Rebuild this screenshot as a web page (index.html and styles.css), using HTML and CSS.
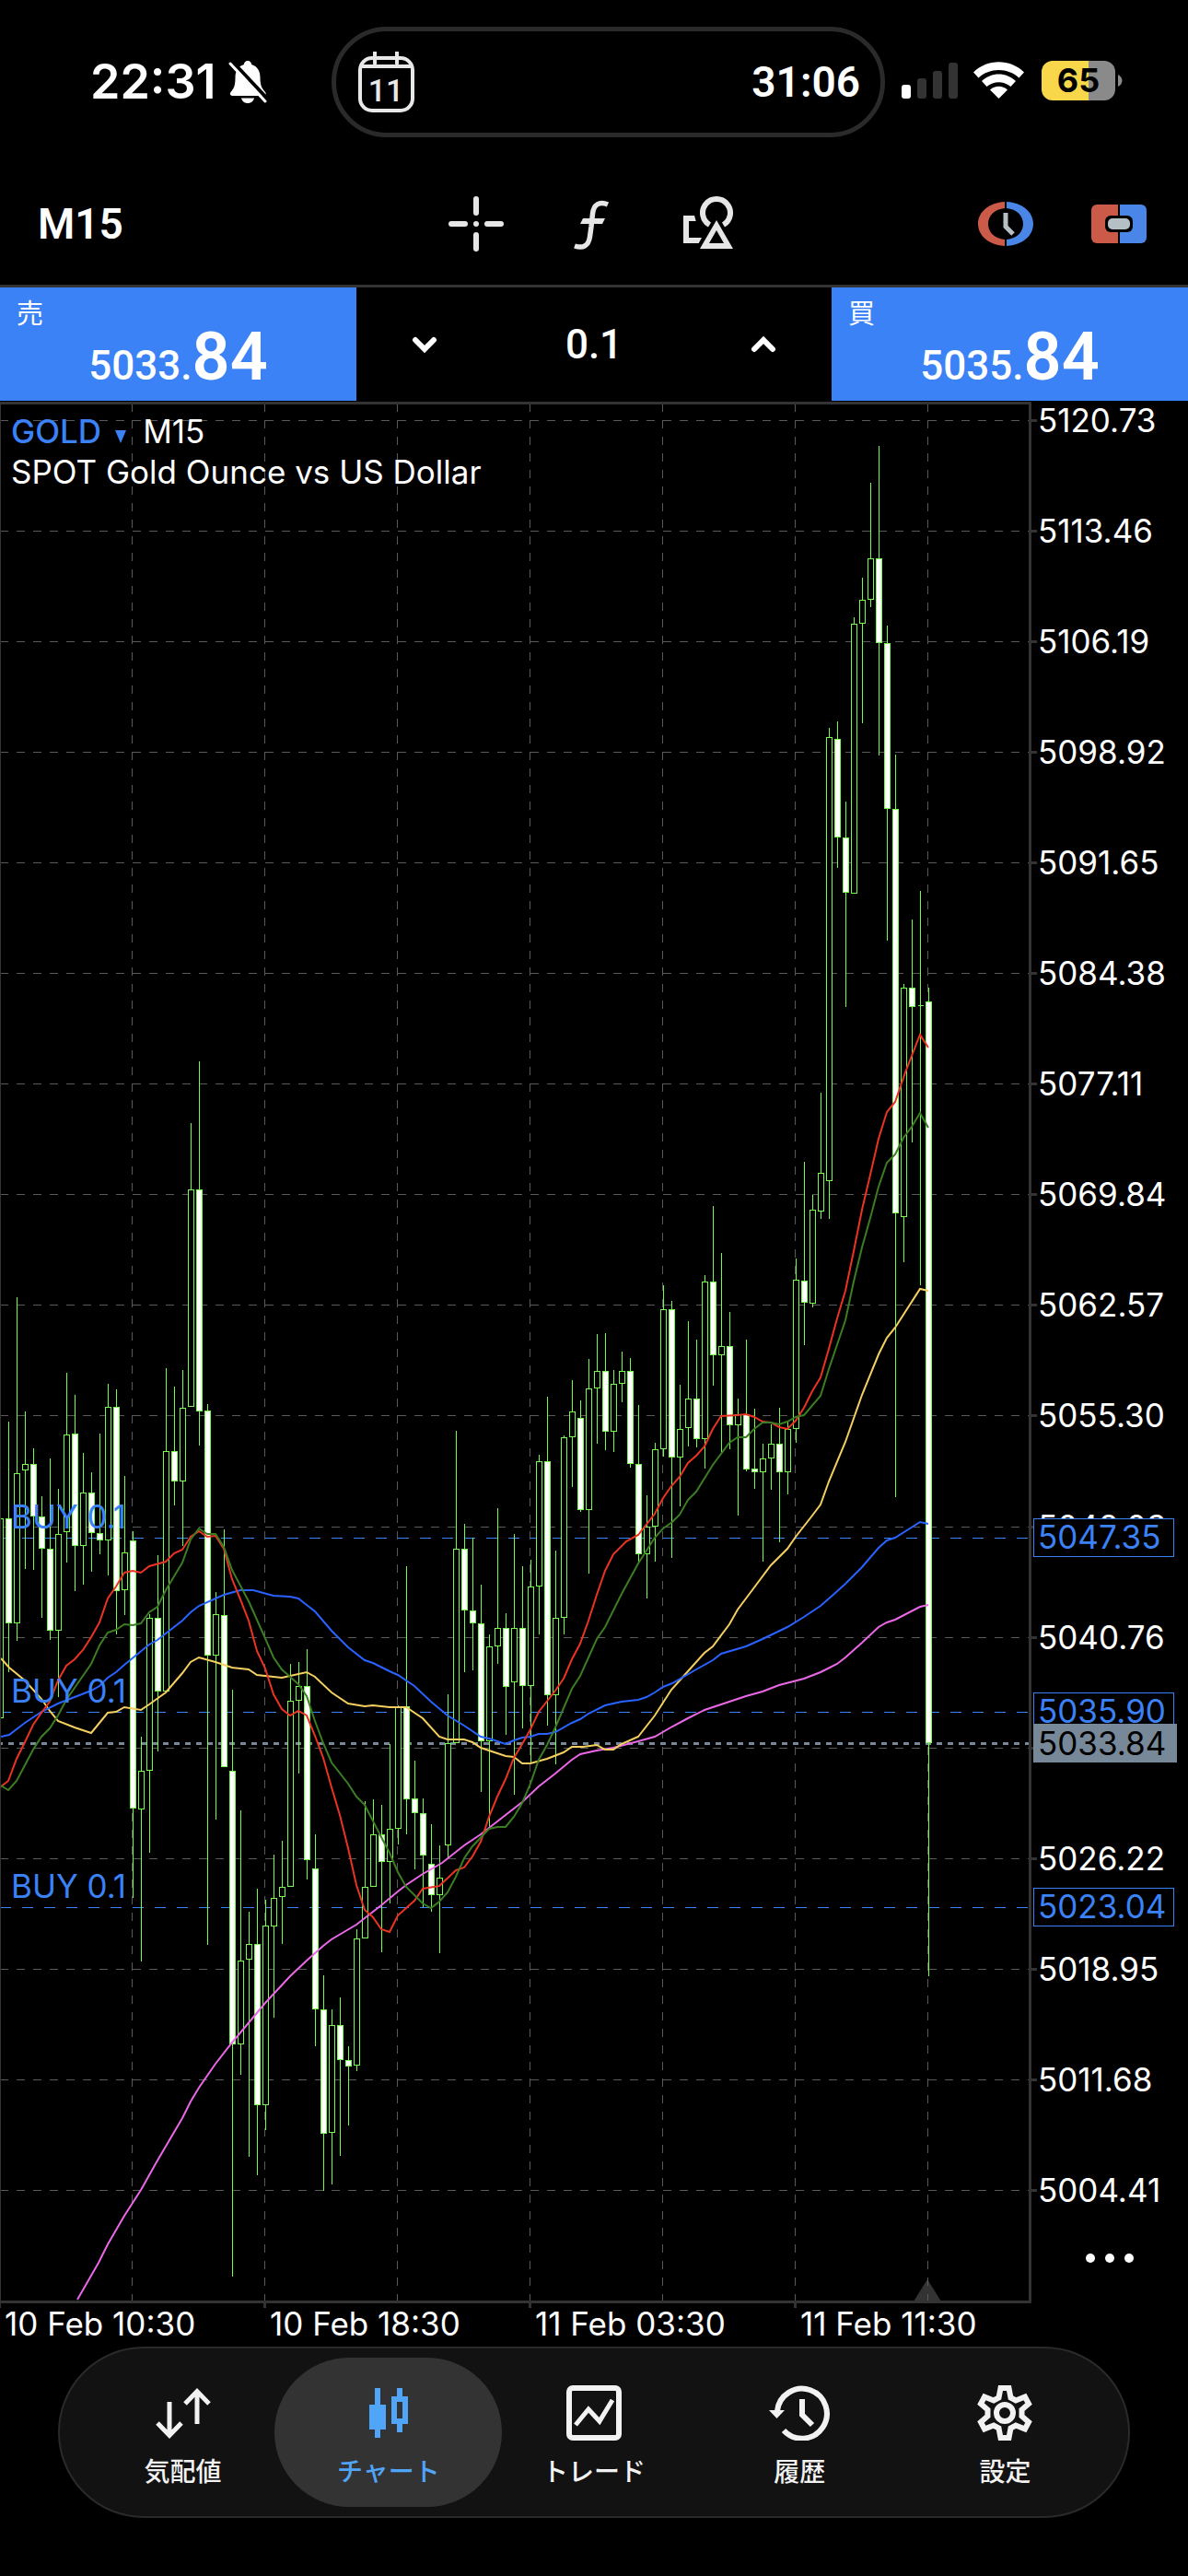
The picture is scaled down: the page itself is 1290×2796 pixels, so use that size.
FILE: index.html
```html
<!DOCTYPE html>
<html lang="ja">
<head>
<meta charset="utf-8">
<meta name="viewport" content="width=device-width, initial-scale=1">
<title>GOLD M15</title>
<link rel="stylesheet" href="styles.css">
</head>
<body>
<header class="status">
  <div class="status-left">
    <span class="clock">22:31</span>
    <svg class="bell" viewBox="0 0 42 46" width="42" height="46" aria-hidden="true">
      <path fill="#fff" d="M21 0c2.500 0 4 1.700 4.200 4C31.500 6 34.500 11 34.500 18c0 9 2 12 5.500 16 1.500 2 .5 4-2 4H4.500c-2.500 0-3.500-2-2-4C6 30 7.500 27 7.500 18 7.500 11 10.500 6 16.800 4 17 1.700 18.500 0 21 0z"/>
      <path fill="#fff" d="M14 40.500h14c-.8 3.300-3.500 5.500-7 5.500s-6.200-2.200-7-5.500z"/>
      <path stroke="#000" stroke-width="4" d="M4.500 1 42 41"/>
      <path stroke="#fff" stroke-width="3" stroke-linecap="round" d="M2 3 40 44"/>
    </svg>
  </div>
  <div class="island">
    <svg viewBox="0 0 61 66" width="61" height="66" aria-hidden="true">
      <rect x="2" y="7" width="57" height="57" rx="13" fill="none" stroke="#e8e8e8" stroke-width="4"/>
      <path d="M3 16H58" stroke="#e8e8e8" stroke-width="4"/>
      <path d="M18 1V13M42 1V13" stroke="#e8e8e8" stroke-width="4" stroke-linecap="round"/>
      <text x="30" y="54" class="cal-day">11</text>
    </svg>
    <span class="timer">31:06</span>
  </div>
  <svg class="indicators" viewBox="0 0 240 46" width="240" height="46" aria-hidden="true">
    <rect x="0" y="26" width="10" height="15" rx="3" fill="#fff"/>
    <g fill="#333"><rect x="17" y="19" width="10" height="22" rx="3"/><rect x="34" y="11" width="10" height="30" rx="3"/><rect x="51" y="2" width="10" height="39" rx="3"/></g>
    <g fill="#fff">
      <path d="M78 12.500C93 -2.500 118 -2.500 133 12.500L127.500 18.500C115.500 7 95.500 7 83.500 18.500Z"/>
      <path d="M87 22C97.500 12 113.500 12 124 22L118.500 28C111 21.500 100 21.500 92.500 28Z"/>
      <path d="M96 31.500C101.500 26.500 109.500 26.500 115 31.500L105.500 41Z"/>
    </g>
    <path fill="#f8d74a" d="M164 0h39v43h-39a12 12 0 0 1-12-12V12a12 12 0 0 1 12-12z"/>
    <path fill="#8a8a8a" d="M203 0h17a12 12 0 0 1 12 12v19a12 12 0 0 1-12 12h-17z"/>
    <path fill="#8a8a8a" d="M235 15c6 3 6 10 0 13z"/>
    <text x="192" y="34" class="battery">65</text>
  </svg>
</header>

<div class="toolbar">
  <button class="timeframe" type="button">M15</button>
  <div class="tools">
    <button type="button" aria-label="十字線">
      <svg viewBox="0 0 60 60" width="60" height="60"><path d="M30 3V18M30 42V57M3 30H18M42 30H57" stroke="#e6e6e6" stroke-width="6" stroke-linecap="round"/><circle cx="30" cy="30" r="3" fill="#e6e6e6"/></svg>
    </button>
    <button type="button" aria-label="インディケータ">
      <svg viewBox="0 0 60 60" width="60" height="60"><path d="M47 9C38 5 31.500 9 30.500 19L29 33 27.500 44C26 54 20 57 11 54" fill="none" stroke="#e6e6e6" stroke-width="5.500"/><path d="M20 24H44L41 30H17Z" fill="#e6e6e6"/></svg>
    </button>
    <button type="button" aria-label="オブジェクト">
      <svg viewBox="0 0 60 60" width="60" height="60"><path d="M31.500 31A15 15 0 1 1 46.500 31" fill="none" stroke="#e6e6e6" stroke-width="6"/><path fill="#e6e6e6" fill-rule="evenodd" d="M39 26 57 57H21ZM39 37 31 51H47ZM3 21H15L16.700 27H9V45H23L19.700 51H3Z"/></svg>
    </button>
  </div>
  <div class="modes">
    <button type="button" aria-label="取引時間">
      <svg viewBox="0 0 60 48" width="60" height="48"><path fill="#cb5a48" d="M29 0V7C18 8 11 15 11 24S18 40 29 41V48C12 47 0 37 0 24S12 1 29 0Z"/><path fill="#4a86e8" d="M31 0V7C42 8 49 15 49 24S42 40 31 41V48C48 47 60 37 60 24S48 1 31 0Z"/><path d="M30 12V27L38 35" fill="none" stroke="#b4c0c6" stroke-width="5"/></svg>
    </button>
    <button type="button" aria-label="ワンクリック取引">
      <svg viewBox="0 0 60 42" width="60" height="42"><path fill="#cb5a48" d="M6 0H29V42H6A6 6 0 0 1 0 36V6A6 6 0 0 1 6 0Z"/><path fill="#4a86e8" d="M31 0H54A6 6 0 0 1 60 6V36A6 6 0 0 1 54 42H31Z"/><rect x="15" y="12" width="30" height="18" rx="6"/><rect x="18" y="15" width="24" height="12" rx="5" fill="#b4c0c6"/></svg>
    </button>
  </div>
</div>

<section class="trade">
  <button class="quote" type="button"><span class="side">売</span><span class="price">5033.<b>84</b></span></button>
  <div class="volume">
    <button type="button" aria-label="減らす"><svg viewBox="0 0 28 20" width="28" height="20"><path d="M4 5 14 15 24 5" class="chevron"/></svg></button>
    <input type="text" value="0.1" aria-label="ロット" size="4">
    <button type="button" aria-label="増やす"><svg viewBox="0 0 28 20" width="28" height="20"><path d="M4 15 14 5 24 15" class="chevron"/></svg></button>
  </div>
  <button class="quote" type="button"><span class="side">買</span><span class="price">5035.<b>84</b></span></button>
</section>

<main class="chart">
  <svg id="plot" class="plot" viewBox="0 435 1290 2106" role="img" aria-label="GOLD M15"></svg>
  <div class="legend">
    <button type="button" class="symbol">GOLD <svg viewBox="0 0 12 14" width="12" height="14"><path d="M0 0H12L6 14Z" fill="#3b82f6"/></svg></button>
    <span>M15</span>
    <p>SPOT Gold Ounce vs US Dollar</p>
  </div>
  <button type="button" class="more" aria-label="その他"><svg viewBox="0 0 52 10" width="52" height="10" fill="#fff"><circle cx="5" cy="5" r="5"/><circle cx="26" cy="5" r="5"/><circle cx="47" cy="5" r="5"/></svg></button>
</main>

<nav class="tabs">
  <a href="#quotes"><svg viewBox="0 0 60 60" width="60" height="60"><path class="line thin" d="M15 18V55M2 41 15 54.500 28 41M45 42V6M32 20 45 6.500 58 20"/></svg>気配値</a>
  <a href="#chart" class="active" aria-current="page"><svg viewBox="0 0 60 60" width="60" height="60"><path fill="#50a5f8" d="M15 3h6v18h6v27h-6v9h-6v-9H9V21h6zM39 3h6v9h6v30h-6v9h-6v-9h-6V12h6zM39 18v18h6V18z" fill-rule="evenodd"/></svg>チャート</a>
  <a href="#trade"><svg viewBox="0 0 60 60" width="60" height="60"><rect class="line" x="3" y="3" width="54" height="54" rx="4"/><path class="line thin" d="M10 43 24 26 36 39 50 16"/></svg>トレード</a>
  <a href="#history"><svg viewBox="0 0 66 60" width="66" height="60"><path class="line" d="M9 28A27 27 0 1 1 16 49"/><path fill="#f2f2f2" d="M0 27H17L8.500 36Z"/><path class="line" d="M36 15V32L47 43"/></svg>履歴</a>
  <a href="#settings"><svg viewBox="0 0 60 60" width="60" height="60"><path class="line" d="M25.500 3H34.500L36.500 13.500 42 16.500 52 12.500 56 20 48.500 26.500V33.500L56 40 52 47.500 42 43.500 36.500 46.500 34.500 57H25.500L23.500 46.500 18 43.500 8 47.500 4 40 11.500 33.500V26.500L4 20 8 12.500 18 16.500 23.500 13.500Z"/><circle class="line" cx="30" cy="30" r="9"/></svg>設定</a>
</nav>
<script src="chart.js"></script>
</body>
</html>
```
FILE: styles.css
```css
* { box-sizing: border-box; }

body {
  margin: 0;
  min-height: 100vh;
  background: #000;
  color: #fff;
  font-family: Inter, "Noto Sans CJK JP", sans-serif;
}

button {
  padding: 0;
  border: 0;
  background: none;
  color: inherit;
  font: inherit;
  cursor: pointer;
}

svg { display: block; }

/* status bar */
.status {
  display: grid;
  grid-template-columns: 360fr 601fr 329fr;
  align-items: center;
  padding: 29px 0 28px;
}
.status-left {
  display: flex;
  align-items: center;
  gap: 14px;
  padding-left: 98px;
}
.clock { font-size: 52px; font-weight: 600; line-height: 60px; }
.island {
  display: flex;
  align-items: center;
  justify-content: space-between;
  height: 120px;
  padding: 0 22px 0 24px;
  border: 5px solid #2a2a2a;
  border-radius: 60px;
}
.cal-day {
  fill: #e8e8e8;
  font: 500 34px Roboto, sans-serif;
  text-anchor: middle;
}
.timer { font: 600 46px Roboto, sans-serif; }
.indicators { margin-left: 18px; overflow: visible; }
.battery { font-size: 36px; font-weight: 700; text-anchor: middle; }

/* toolbar */
.toolbar {
  display: grid;
  grid-template-columns: 1fr auto 1fr;
  align-items: center;
  height: 132px;
  padding: 0 45px 0 41px;
}
.timeframe {
  justify-self: start;
  font: 600 46px Roboto, sans-serif;
}
.tools { display: flex; gap: 66px; }
.modes { display: flex; align-items: center; justify-content: flex-end; gap: 63px; }

/* one-click trading */
.trade {
  display: grid;
  grid-template-columns: 3fr 4fr 3fr;
  height: 126px;
  border-top: 3px solid #333;
}
.quote {
  display: grid;
  grid-template-rows: 42px 1fr;
  background: #3b82f6;
  text-align: center;
}
.side {
  padding: 6px 0 0 18px;
  font: 400 29px/40px "Noto Sans CJK JP", sans-serif;
  text-align: left;
}
.price { font: 500 44px/68px Roboto, sans-serif; }
.price b { font-size: 72px; font-weight: 600; }
.volume {
  display: flex;
  align-items: center;
  justify-content: space-between;
  padding: 0 60px;
}
.volume input {
  border: 0;
  background: none;
  color: #fff;
  font: 500 44px Roboto, sans-serif;
  text-align: center;
}
.chevron { fill: none; stroke: #fff; stroke-width: 6; stroke-linecap: round; stroke-linejoin: miter; }

/* chart */
.chart { position: relative; }
.plot { width: 100%; height: auto; }
.plot text { font-size: 35px; fill: #fff; }
.plot .order-text { fill: #3b82f6; }
.plot .current-text { fill: #000; }
.frame { fill: none; stroke: #333; stroke-width: 3; }
.grid { fill: none; stroke: #5a5a5a; stroke-dasharray: 9 9; }
.order { fill: none; stroke: #3b82f6; stroke-dasharray: 12 12; }
.order-box { fill: #000; stroke: #3b82f6; }
.current { fill: none; stroke: #778899; stroke-width: 3; stroke-dasharray: 6 6; }
.wick { fill: none; stroke: #75fb4c; }
.up { fill: #000; stroke: #75fb4c; }
.down { fill: #fff; stroke: #75fb4c; }
.ma { fill: none; stroke-width: 2; }

.legend {
  position: absolute;
  top: 11px;
  left: 12px;
  font-size: 35px;
  line-height: 44px;
}
.legend p { margin: 0; }
.symbol { color: #3b82f6; font-weight: 500; }
.symbol svg { display: inline-block; margin: 0 8px 0 6px; }
.more { position: absolute; right: 59px; bottom: 85px; }

/* tab bar */
.tabs {
  display: grid;
  grid-template-columns: repeat(5, 1fr);
  margin: 6px 63px 63px;
  padding: 10px 22px;
  height: 186px;
  border: 2px solid #2a2a2a;
  border-radius: 93px;
  background: #121212;
}
.tabs a {
  display: flex;
  flex-direction: column;
  align-items: center;
  gap: 12px;
  padding-top: 30px;
  color: #f2f2f2;
  font: 500 28px/40px "Noto Sans CJK JP", sans-serif;
  text-decoration: none;
}
.tabs .active {
  margin: 0 -12px;
  border-radius: 81px;
  background: #333;
  color: #50a5f8;
}
.line { fill: none; stroke: #f2f2f2; stroke-width: 6; }
.thin { stroke-width: 5; }
```
FILE: chart.js
```js
// Candles, nine units apart: [high, body top, body bottom, low, rising]
const candles = [
  [1648,1648,1864,1864,1],[1543,1648,1761,1814,0],[1408,1599,1761,1780,1],[1532,1589,1595,1702,1],
  [1572,1589,1645,1703,0],[1624,1646,1680,1755,0],[1583,1681,1769,1779,0],[1616,1665,1769,1841,1],
  [1490,1557,1662,1695,1],[1514,1556,1677,1726,0],[1577,1620,1677,1719,1],[1598,1620,1663,1705,0],
  [1556,1664,1671,1686,0],[1502,1527,1671,1709,1],[1508,1527,1726,1773,0],[1602,1685,1725,1752,1],
  [1662,1672,1962,2059,0],[1885,1922,1963,2128,1],[1752,1756,1921,2010,1],[1688,1756,1835,1900,0],
  [1485,1575,1835,1835,1],[1505,1575,1607,1633,0],[1487,1528,1607,1677,1],[1219,1291,1526,1526,1],
  [1152,1291,1531,1568,0],[1524,1531,1796,2110,0],[1728,1752,1796,1974,1],[1660,1753,1917,1917,0],
  [1834,1922,2218,2470,0],[1965,2128,2218,2251,1],[2075,2110,2126,2340,1],[2050,2110,2284,2360,0],
  [2062,2090,2284,2311,1],[2013,2060,2090,2189,1],[1998,2048,2058,2109,1],[1806,1846,2047,2047,1],
  [1804,1830,1845,1924,1],[1790,1830,2018,2039,0],[1991,2028,2180,2220,0],[2144,2181,2315,2377,0],
  [2181,2198,2314,2370,1],[2168,2198,2235,2339,0],[2221,2236,2242,2306,0],[2094,2104,2241,2247,1],
  [1955,2048,2103,2103,1],[1953,1991,2047,2047,1],[1959,1991,2020,2118,0],[1893,1985,2020,2065,1],
  [1851,1853,1984,2001,1],[1700,1852,1952,1990,0],[1911,1952,1967,2028,0],[1952,1968,2013,2069,0],
  [1980,2023,2056,2074,0],[2003,2038,2056,2119,1],[1839,1892,2002,2015,1],[1553,1681,1891,1891,1],
  [1654,1681,1747,1814,0],[1669,1748,1761,1812,0],[1720,1762,1889,1944,0],[1774,1787,1889,1985,1],
  [1637,1767,1786,1805,1],[1751,1767,1830,1882,0],[1665,1767,1825,1947,1],[1700,1767,1829,1875,0],
  [1693,1722,1829,1913,1],[1579,1586,1721,1773,1],[1516,1586,1839,1872,0],[1683,1756,1839,1914,1],
  [1558,1560,1755,1773,1],[1498,1532,1559,1613,1],[1520,1539,1638,1640,0],[1475,1507,1638,1707,1],
  [1448,1488,1506,1566,1],[1447,1488,1553,1573,0],[1487,1502,1553,1575,1],[1467,1488,1501,1521,1],
  [1474,1488,1588,1592,0],[1525,1589,1686,1695,0],[1623,1657,1686,1734,1],[1566,1573,1656,1694,1],
  [1395,1421,1572,1580,1],[1412,1421,1581,1690,0],[1503,1551,1581,1634,1],[1434,1518,1549,1569,1],
  [1454,1518,1561,1570,0],[1384,1391,1561,1593,1],[1309,1391,1470,1503,0],[1360,1461,1470,1576,1],
  [1424,1461,1546,1572,0],[1518,1535,1546,1644,1],[1454,1535,1594,1596,0],[1529,1594,1597,1615,0],
  [1567,1583,1597,1694,1],[1546,1567,1582,1616,1],[1528,1567,1597,1673,0],[1543,1551,1597,1621,1],
  [1366,1389,1550,1565,1],[1261,1390,1413,1459,0],[1297,1313,1414,1418,1],[1186,1273,1314,1322,1],
  [790,800,1281,1322,1],[783,802,908,941,0],[870,909,968,1092,0],[670,677,969,969,1],
  [627,651,676,784,1],[524,606,650,658,1],[484,606,697,819,0],[679,698,877,1020,0],
  [819,878,1316,1624,0],[1068,1072,1320,1369,1],[998,1072,1092,1239,0],[967,1091,1091,1394,1],
  [1072,1087,1891,2144,0]
];

// Moving averages: colour and points
const averages = [
  ['#ea68e6', '84,2496 107,2456 117,2436 135,2405 153,2377 162,2361 171,2345 198,2299 207,2281 216,2266 234,2240 252,2217 288,2174 315,2145 333,2128 351,2112 360,2105 387,2089 414,2068 432,2053 441,2046 459,2034 480,2022 504,2003 522,1991 540,1977 567,1956 585,1939 603,1925 621,1910 630,1904 648,1900 666,1897 693,1890 711,1885 730,1874 747,1865 765,1856 783,1850 810,1841 828,1836 846,1829 873,1822 891,1815 909,1806 918,1799 936,1783 954,1766 963,1761 972,1758 999,1744 1008,1742'],
  ['#f5cf60', '1,1800 10,1810 27,1824 45,1844 54,1857 63,1868 81,1875 99,1881 117,1859 126,1858 135,1853 153,1856 162,1850 180,1837 198,1816 207,1804 216,1799 234,1804 252,1810 270,1812 279,1818 306,1821 315,1819 333,1815 342,1820 360,1837 378,1849 396,1852 405,1851 423,1853 441,1853 459,1865 477,1885 486,1888 504,1888 513,1891 522,1897 549,1906 558,1907 567,1914 576,1914 594,1909 612,1902 621,1896 633,1896 648,1894 657,1899 666,1899 675,1893 693,1885 711,1862 729,1834 747,1814 765,1794 774,1787 792,1763 801,1747 819,1723 837,1699 855,1681 864,1668 882,1645 891,1633 900,1608 918,1565 936,1514 954,1470 963,1452 972,1441 999,1399 1008,1401'],
  ['#2962ff', '1,1885 10,1883 27,1870 45,1858 63,1849 99,1835 108,1830 117,1821 126,1815 135,1807 162,1785 171,1780 198,1759 207,1750 216,1743 243,1731 261,1726 275,1726 297,1732 315,1733 324,1735 333,1742 342,1749 360,1770 378,1788 396,1802 405,1805 423,1814 432,1818 450,1830 468,1847 486,1862 504,1873 522,1885 531,1887 549,1893 558,1889 567,1886 576,1885 585,1882 594,1882 603,1880 621,1870 630,1866 639,1860 657,1851 675,1847 693,1845 702,1842 711,1837 720,1831 730,1827 756,1812 774,1802 783,1795 810,1787 828,1779 855,1766 873,1755 891,1743 907,1729 918,1719 936,1701 954,1680 963,1672 972,1669 999,1652 1008,1654'],
  ['#eb3324', '0,1940 9,1933 18,1909 27,1891 36,1872 45,1859 54,1847 63,1824 72,1808 81,1801 90,1791 99,1777 108,1761 117,1735 126,1722 135,1707 144,1705 153,1707 162,1700 180,1695 189,1686 198,1682 207,1668 216,1662 225,1668 234,1667 243,1681 252,1714 261,1736 270,1759 279,1792 288,1811 297,1839 306,1855 315,1862 324,1857 333,1862 342,1884 351,1908 360,1940 369,1970 378,2006 387,2046 396,2073 405,2081 414,2094 423,2097 432,2079 450,2063 459,2050 477,2047 495,2030 504,2027 513,2015 522,1999 531,1972 540,1950 549,1931 558,1908 567,1893 576,1877 585,1858 603,1835 612,1822 621,1801 630,1784 639,1759 648,1731 657,1705 666,1687 680,1673 693,1666 711,1643 720,1626 729,1613 738,1603 747,1588 756,1580 765,1570 774,1551 783,1537 801,1536 810,1535 819,1538 828,1543 837,1544 846,1549 855,1551 864,1542 873,1528 882,1510 891,1495 900,1464 909,1431 918,1401 927,1358 936,1313 945,1275 954,1236 963,1207 972,1196 983,1164 999,1123 1008,1137'],
  ['#3b7d23', '1,1938 9,1943 18,1933 27,1916 36,1899 45,1885 54,1876 63,1862 72,1845 81,1832 99,1806 108,1786 117,1772 126,1769 135,1763 144,1764 153,1762 162,1750 171,1744 180,1726 189,1711 198,1696 207,1671 216,1659 225,1665 234,1665 243,1679 252,1704 270,1738 287,1776 297,1799 306,1812 315,1820 324,1828 333,1841 342,1868 351,1892 360,1913 378,1936 387,1950 396,1959 414,1994 423,2011 432,2032 441,2048 459,2066 468,2071 477,2064 486,2054 495,2037 504,2017 513,2004 531,1985 540,1983 549,1983 558,1972 567,1957 576,1936 585,1910 594,1894 603,1875 621,1833 630,1819 648,1779 657,1766 675,1730 693,1697 711,1669 720,1659 730,1652 738,1644 747,1628 756,1619 774,1590 792,1566 801,1560 810,1560 819,1551 828,1544 837,1544 846,1546 855,1543 864,1538 873,1536 891,1515 900,1486 918,1433 927,1391 936,1354 945,1322 954,1288 963,1262 972,1253 981,1235 990,1223 999,1208 1008,1224']
];

const prices = ['5120.73','5113.46','5106.19','5098.92','5091.65','5084.38','5077.11','5069.84','5062.57','5055.30','5048.03','5040.76','5033.49','5026.22','5018.95','5011.68','5004.41'];
const orders = [['5047.35', 1669], ['5035.90', 1858], ['5023.04', 2070]];
const times = ['10 Feb 10:30', '10 Feb 18:30', '11 Feb 03:30', '11 Feb 11:30'];
const crisp = 'shape-rendering="crispEdges"';

let out = '';
const text = (x, y, s, cls = '') => `<text x="${x}" y="${y}" class="${cls}">${s}</text>`;
const path = (cls, d) => `<path class="${cls}" ${crisp} d="${d}"/>`;

// triangle that marks the newest bar
out += '<path d="M1007 2474 1022 2498H992Z" fill="#333"/>';

// grid
const rows = prices.map((p, i) => Math.floor(456 + i * 120.1) + 0.5);
out += path('grid', rows.map(y => `M0 ${y}H1117`).join(''));
for (let x = 143.5; x < 1100; x += 144) out += path('grid', `M${x} 438V2498`);

// order and price levels
orders.forEach(([, y]) => { out += path('order', `M0 ${y + 0.5}H1117`); });
out += path('current', 'M-3 1892.5H1117');

// candles
let wicks = '', up = '', down = '';
candles.forEach(([h, t, b, l, rising], i) => {
  const x = i * 9 + 0.5;
  wicks += `M${x} ${h}V${l + 1}`;
  const body = `M${x - 3} ${t + 0.5}h6V${b + 0.5}h-6z`;
  if (rising) up += body; else down += body;
});
out += path('wick', wicks) + path('up', up) + path('down', down);
averages.forEach(([color, pts]) => {
  out += `<polyline class="ma" stroke="${color}" points="${pts}"/>`;
});
orders.forEach(([, y]) => { out += text(12, y - 10, 'BUY 0.1', 'order-text'); });

// frame and ticks
out += path('frame', 'M0 437.5H1118.5V2498.5H0');
out += path('frame', rows.map(y => `M1120 ${y}h6`).join(''));
out += `<path ${crisp} fill="#333" d="M0 438h1v2067h-1zM286 2498h3v7h-3zM574 2498h3v7h-3zM862 2498h3v7h-3z"/>`;

// axis labels
prices.forEach((p, i) => { if (i !== 12) out += text(1127, rows[i] + 12, p); });
orders.forEach(([p, y]) => {
  out += `<rect class="order-box" x="1122.5" y="${y - 20.5}" width="152" height="41"/>` + text(1127, y + 12, p, 'order-text');
});
out += '<rect x="1122" y="1871" width="156" height="42" fill="#778899"/>' + text(1127, 1905, '5033.84', 'current-text');
times.forEach((t, i) => { out += text(5 + i * 288, 2535, t); });

document.getElementById('plot').innerHTML = out;
```
